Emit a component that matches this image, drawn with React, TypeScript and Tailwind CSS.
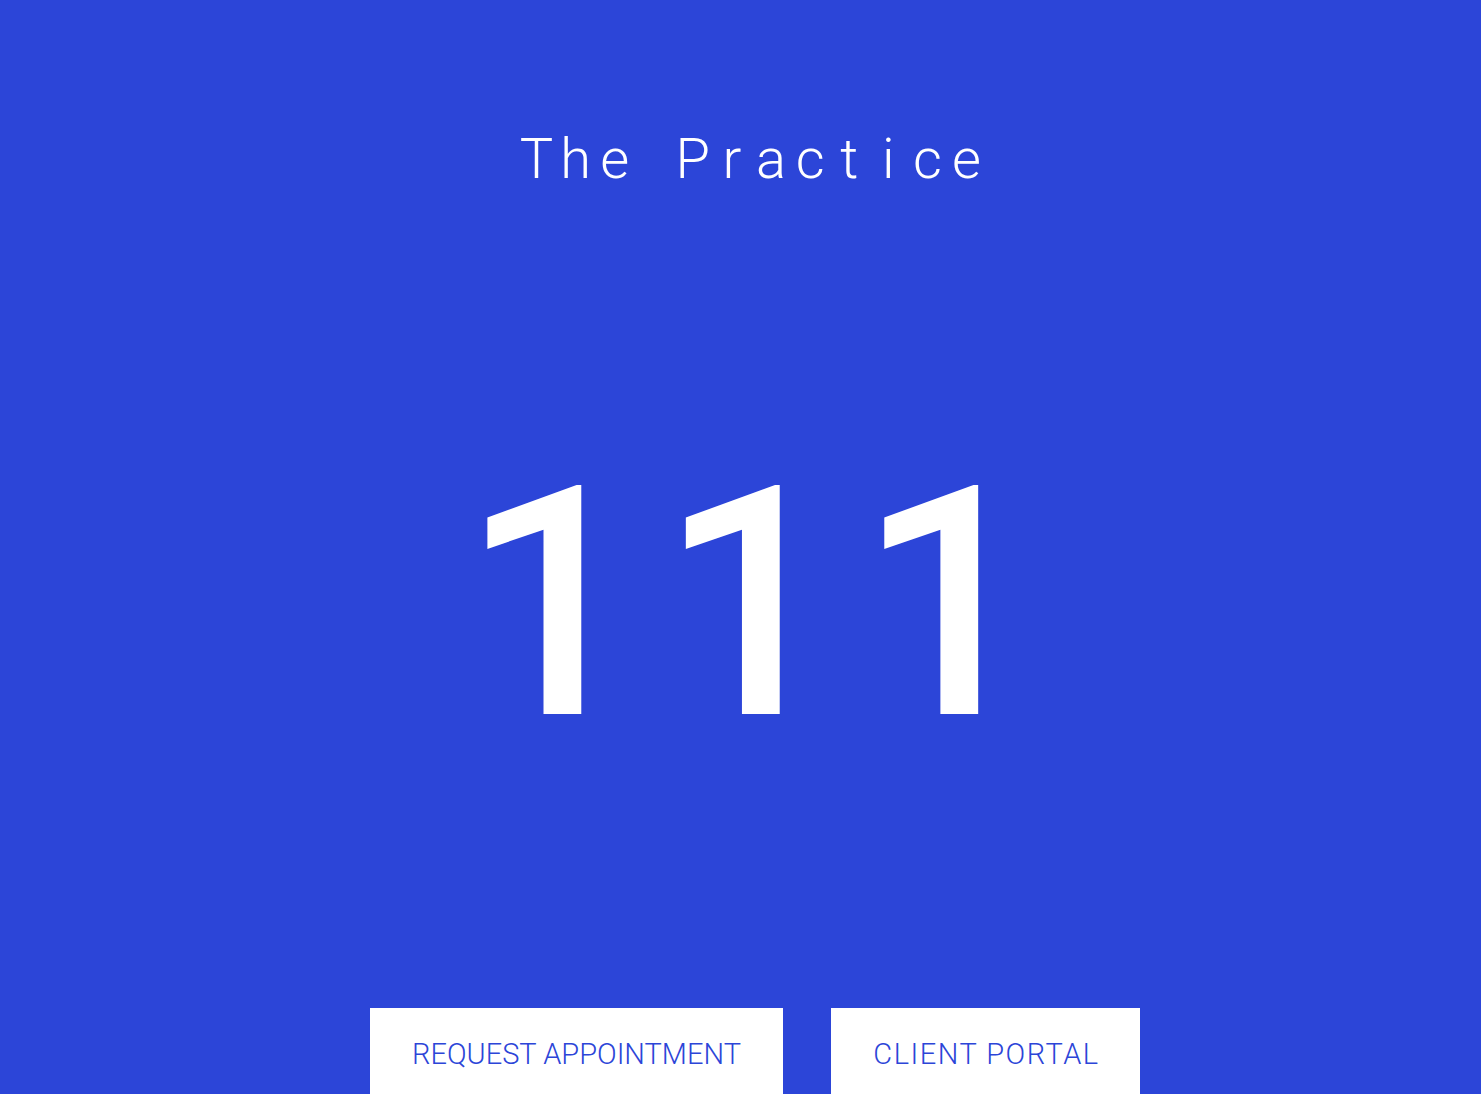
import React from "react";

const TITLE = "The Practice".split("");

export default function App() {
  return (
    <div
      className="h-[1094px] w-full overflow-hidden bg-[#2c45d8] text-white flex flex-col items-center"
      style={{ fontFamily: "Roboto, 'Noto Sans', sans-serif" }}
    >
      <h1 className="mt-[131px] flex ml-[22px] text-[56px] leading-[56px] font-light" aria-label="The Practice">
        {TITLE.map((c, i) => (
          <span key={i} className="inline-block w-[39.1px] text-center">
            {c === " " ? "\u00a0" : c}
          </span>
        ))}
      </h1>

      <div className="mt-[257px] ml-[36px] text-[321px] leading-[321px] font-medium tracking-[16px]">
        111
      </div>

      <div className="mt-[243px] ml-[29px] flex gap-[48px]">
        <a className="w-[413px] h-[92px] bg-white text-[#2c45d8] flex justify-center pt-[32px] text-[29px] leading-[29px] font-light">
          REQUEST APPOINTMENT
        </a>
        <a className="w-[309px] h-[92px] bg-white text-[#2c45d8] flex justify-center pt-[32px] pl-[2px] text-[29px] leading-[29px] font-light tracking-[1.5px]">
          CLIENT PORTAL
        </a>
      </div>
    </div>
  );
}
